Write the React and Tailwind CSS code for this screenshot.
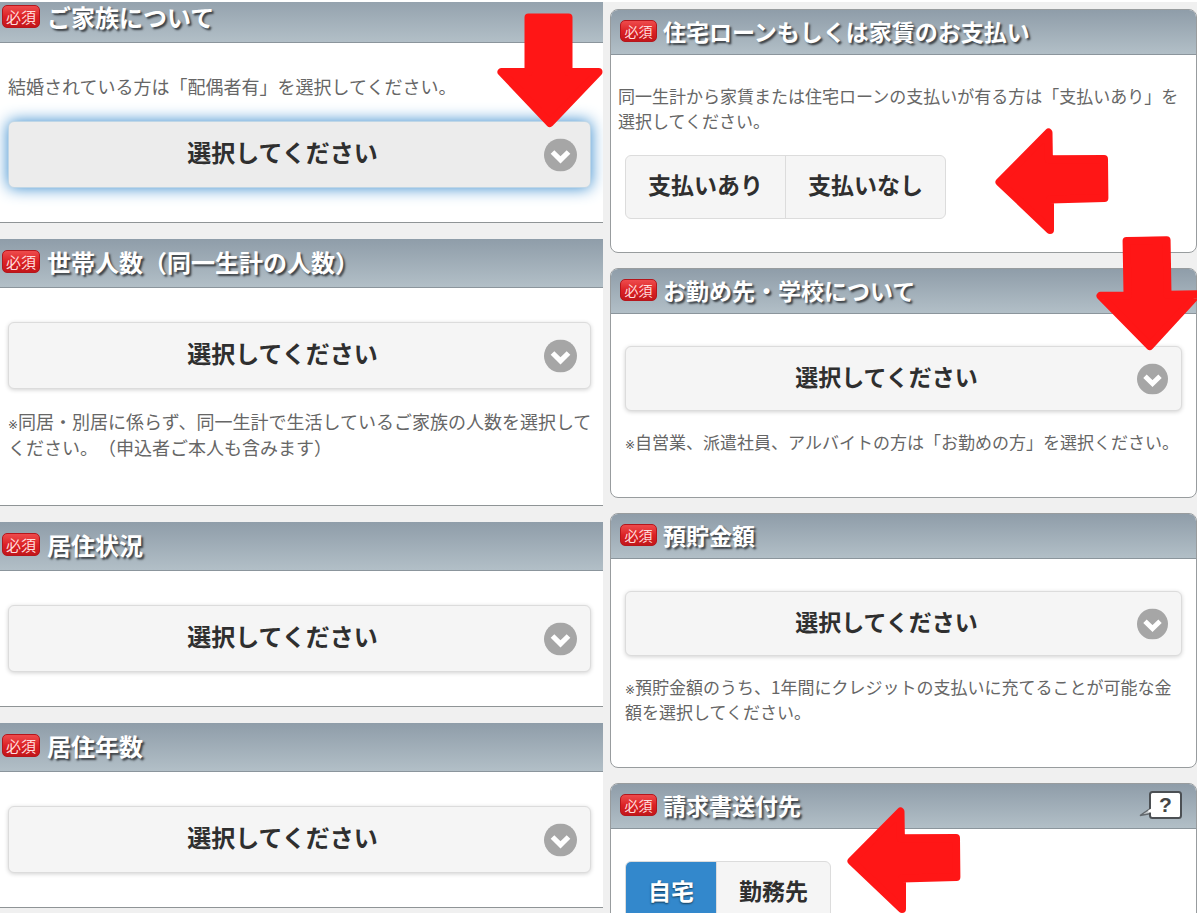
import { useState } from "react";

const PLACEHOLDER = "選択してください";

// size variants for the two columns
const sizes = {
  lg: {
    panel: "border-b border-[#8f9496]",
    header: "h-[49px] pl-[2px] pr-4 pb-[3px] gap-[7px] text-[24px]",
    badge: "w-[38px] h-[23px] text-[15px]",
    body: "px-2 pt-[34px] pb-[34px]",
    note: "text-[18px] leading-[26px]",
    select: "h-[67px] text-[24px]",
    icon: "w-[33px] h-[33px] right-[14px]",
  },
  md: {
    panel: "border border-[#989c9e] rounded-lg",
    header: "h-[45px] pl-[9px] pr-[14px] pb-[2px] gap-[6px] text-[23px] rounded-t-[7px]",
    badge: "w-[37px] h-[22px] text-[14px]",
    body: "px-[14px] pt-[32px] pb-[43px]",
    note: "text-[17px] leading-[25px]",
    select: "h-[65px] text-[23px]",
    icon: "w-[31px] h-[31px] right-[14px]",
  },
};

function RequiredBadge({ size }) {
  return (
    <span
      className={`${sizes[size].badge} shrink-0 flex items-center justify-center rounded-[5px] border border-[#b5161c] bg-linear-to-b from-[#ee4a4c] via-[#dc2226] to-[#c2161a] text-[#ffdcdc] font-normal leading-none [text-shadow:none]`}
    >
      必須
    </span>
  );
}

function Panel({ id, title, size, help, arrow, bodyClass, children }) {
  const s = sizes[size];
  return (
    <section className={`relative bg-white ${s.panel}`}>
      <header
        className={`flex items-center border-b border-[#8b959c] bg-linear-to-b from-[#8f9da9] to-[#b2bfc7] font-bold text-white ${s.header}`}
      >
        <RequiredBadge size={size} />
        <h2 id={`${id}-title`} className="leading-none [text-shadow:2px_2px_2px_#3a3f44]">
          {title}
        </h2>
        {help && <HelpButton />}
      </header>
      <div className={bodyClass || s.body}>{children}</div>
      {arrow}
    </section>
  );
}

function HelpButton() {
  return (
    <button type="button" aria-label="ヘルプ" className="ml-auto">
      <svg width="43" height="28" viewBox="0 0 43 28" className="block">
        <path d="M12 17 L1 24.500 L12 22.500" fill="#c8cdd0" stroke="#63696e" strokeWidth="1.500" />
        <rect x="11" y="1" width="31" height="26" rx="2.500" fill="#fff" stroke="#4c5054" strokeWidth="2" />
        <path d="M9.500 19 L12.500 17.500 L12.500 21.500 L9.500 21.500 Z" fill="#fff" />
        <text x="26.500" y="21" textAnchor="middle" fontFamily="Liberation Sans, sans-serif" fontWeight="700" fontSize="21" fill="#444">
          ?
        </text>
      </svg>
    </button>
  );
}

function SelectBox({ id, size, active, options = [] }) {
  const s = sizes[size];
  const look = active
    ? "bg-[#ececec] border-[#bfd6e6] shadow-[0_0_16px_#3388cc]"
    : "bg-[#f5f5f5] border-[#dcdcdc] shadow-[0_1px_4px_rgba(0,0,0,0.18)]";
  return (
    <div className="relative">
      <select
        aria-labelledby={`${id}-title`}
        className={`block w-full appearance-none rounded-md border pr-[34px] pb-[5px] font-bold text-[#2f2f2f] outline-none [text-align-last:center] ${s.select} ${look}`}
      >
        <option>{PLACEHOLDER}</option>
        {options.map((o) => (
          <option key={o}>{o}</option>
        ))}
      </select>
      <svg viewBox="0 0 33 33" className={`absolute top-1/2 -translate-y-1/2 pointer-events-none ${s.icon}`}>
        <circle cx="16.500" cy="16.500" r="16.500" fill="#a6a6a6" />
        <path d="M8.500 13.500 L16.500 21.300 L24.500 13.500" fill="none" stroke="#fff" strokeWidth="5.200" />
      </svg>
    </div>
  );
}

function Segmented({ id, options, value, onChange }) {
  return (
    <div
      role="radiogroup"
      aria-labelledby={`${id}-title`}
      className="flex w-fit h-16 overflow-hidden rounded-md border border-[#dcdcdc] bg-[#f5f5f5] divide-x divide-[#dcdcdc]"
    >
      {options.map((o) => (
        <label
          key={o}
          className={`relative flex items-center px-[22px] pb-[5px] text-[23px] font-bold ${
            value === o ? "bg-[#3388cc] text-white [text-shadow:0_1px_2px_#12364f]" : "text-[#2f2f2f]"
          }`}
        >
          <input type="radio" name={id} checked={value === o} onChange={() => onChange(o)} className="sr-only" />
          {o}
        </label>
      ))}
    </div>
  );
}

function Note({ size, mark, className = "", children }) {
  return (
    <p className={`text-[#666] [text-spacing-trim:space-all] ${sizes[size].note} ${className}`}>
      {mark && <span className="font-['DejaVu_Sans',sans-serif] text-[12px] leading-none text-[#555]">※</span>}
      {children}
    </p>
  );
}

function ArrowDown({ className }) {
  return (
    <svg width="106" height="115" viewBox="0 0 106 115" className={`absolute z-10 pointer-events-none ${className}`}>
      <path
        d="M31.500 4.500 H71.500 V59 H101.500 L52.800 110 L4.500 59 H31.500 Z"
        fill="#ff1616"
        stroke="#ff1616"
        strokeWidth="8"
        strokeLinejoin="round"
      />
    </svg>
  );
}

function ArrowLeft({ className }) {
  return (
    <svg width="114" height="107" viewBox="0 0 114 107" className={`absolute z-10 pointer-events-none ${className}`}>
      <path
        d="M53.500 4.500 L53.900 31.300 L109 31 L109.400 70 L55 71.500 L55 102 L4.500 54 Z"
        fill="#ff1616"
        stroke="#ff1616"
        strokeWidth="8"
        strokeLinejoin="round"
      />
    </svg>
  );
}

export default function App() {
  const [payment, setPayment] = useState("");
  const [billing, setBilling] = useState("自宅");

  return (
    <main
      lang="ja"
      className="h-screen overflow-hidden border-t-2 border-white bg-[#f0f0f0] font-['Noto_Sans_CJK_JP',sans-serif] grid grid-cols-[603fr_587fr] gap-[7px]"
    >
      {/* Left column, scrolled a little past its top */}
      <div className="min-w-0 overflow-hidden">
        <div className="-mt-2 flex flex-col gap-4">
          <Panel
            id="family"
            title="ご家族について"
            size="lg"
            bodyClass="px-2 pt-[30px] pb-[34px]"
            arrow={<ArrowDown className="right-0 top-[19px]" />}
          >
            <Note size="lg" className="mb-[22px]">
              結婚されている方は「配偶者有」を選択してください。
            </Note>
            <div className="mr-1">
              <SelectBox id="family" size="lg" active options={["配偶者有", "配偶者無"]} />
            </div>
          </Panel>

          <Panel id="household" title="世帯人数（同一生計の人数）" size="lg" bodyClass="px-2 pt-[34px] pb-[45px]">
            <div className="mr-1">
              <SelectBox id="household" size="lg" />
            </div>
            <Note size="lg" mark className="mt-[19px]">
              同居・別居に係らず、同一生計で生活しているご家族の人数を選択してください。（申込者ご本人も含みます）
            </Note>
          </Panel>

          <Panel id="housing" title="居住状況" size="lg">
            <div className="mr-1">
              <SelectBox id="housing" size="lg" />
            </div>
          </Panel>

          <Panel id="years" title="居住年数" size="lg">
            <div className="mr-1">
              <SelectBox id="years" size="lg" />
            </div>
          </Panel>
        </div>
      </div>

      {/* Right column */}
      <div className="min-w-0 pt-[7px] flex flex-col gap-[15px]">
        <Panel
          id="payment"
          title="住宅ローンもしくは家賃のお支払い"
          size="md"
          bodyClass="px-[14px] pt-[28px] pb-[33px]"
          arrow={<ArrowLeft className="right-[87px] top-[118px]" />}
        >
          <Note size="md" className="-mx-[7px] mb-[22px]">
            同一生計から家賃または住宅ローンの支払いが有る方は「支払いあり」を選択してください。
          </Note>
          <Segmented id="payment" options={["支払いあり", "支払いなし"]} value={payment} onChange={setPayment} />
        </Panel>

        <Panel
          id="work"
          title="お勤め先・学校について"
          size="md"
          arrow={<ArrowDown className="-right-[6px] -top-[33px] -rotate-1" />}
        >
          <SelectBox id="work" size="md" />
          <Note size="md" mark className="mt-[18px]">
            自営業、派遣社員、アルバイトの方は「お勤めの方」を選択ください。
          </Note>
        </Panel>

        <Panel id="savings" title="預貯金額" size="md">
          <SelectBox id="savings" size="md" />
          <Note size="md" mark className="mt-[18px]">
            預貯金額のうち、1年間にクレジットの支払いに充てることが可能な金額を選択してください。
          </Note>
        </Panel>

        <Panel
          id="billing"
          title="請求書送付先"
          size="md"
          help
          arrow={<ArrowLeft className="right-[235px] top-[23px]" />}
        >
          <Segmented id="billing" options={["自宅", "勤務先"]} value={billing} onChange={setBilling} />
        </Panel>
      </div>
    </main>
  );
}
